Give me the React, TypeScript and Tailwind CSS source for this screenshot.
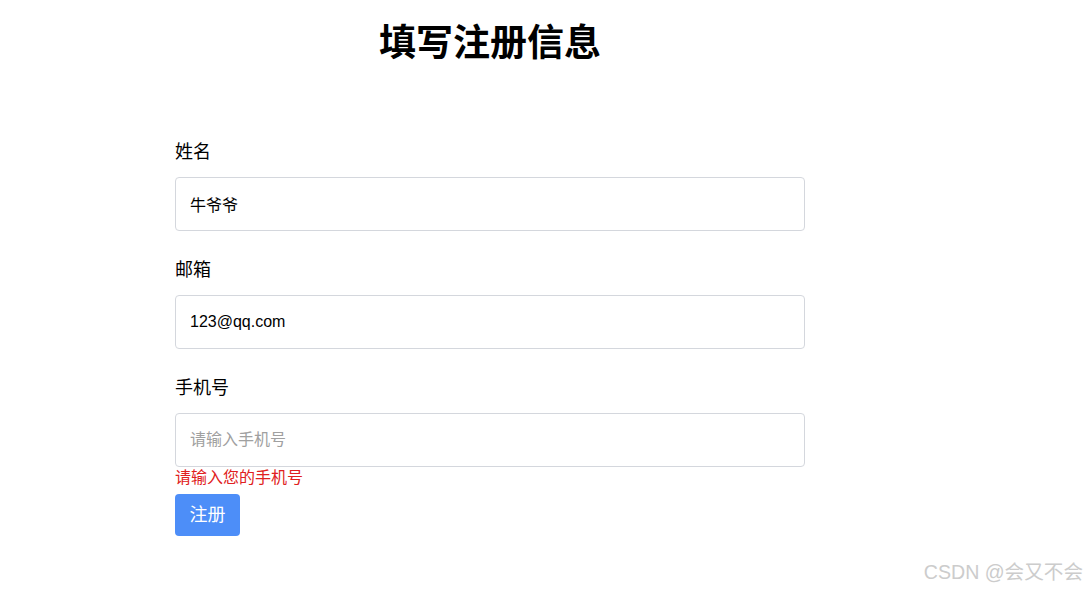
import { useState } from 'react';

const font = "font-['Liberation_Sans','Noto_Sans_CJK_SC',sans-serif]";

export default function App() {
  const [name, setName] = useState('牛爷爷');
  const [email, setEmail] = useState('123@qq.com');
  const [phone, setPhone] = useState('');

  return (
    <div className={`relative min-h-[590px] w-full bg-white ${font}`}>
      <div className="ml-[175px] w-[630px] pt-[22px]">
        <h1 className="text-center text-[37px] leading-[44px] font-bold text-black">填写注册信息</h1>
        <form className="mt-[73px]" onSubmit={(e) => e.preventDefault()}>
          <Field label="姓名" value={name} onChange={setName} placeholder="请输入姓名" />
          <Field label="邮箱" value={email} onChange={setEmail} placeholder="请输入邮箱" />
          <Field label="手机号" value={phone} onChange={setPhone} placeholder="请输入手机号" last />
          <p className="text-[16px] leading-[22px] text-[#e02020]">请输入您的手机号</p>
          <button
            type="submit"
            className="mt-[5px] h-[42px] w-[65px] rounded-[4px] bg-[#4d8ef8] text-[18px] text-white"
          >
            注册
          </button>
        </form>
      </div>
      <div className="absolute right-[4px] bottom-[5px] text-[19.6px] leading-[26px] text-[#cccccc]">
        CSDN @会又不会
      </div>
    </div>
  );
}

function Field({
  label,
  value,
  onChange,
  placeholder,
  last = false,
}: {
  label: string;
  value: string;
  onChange: (v: string) => void;
  placeholder: string;
  last?: boolean;
}) {
  return (
    <div className={last ? '' : 'mb-[26px]'}>
      <label className="block text-[18px] leading-[26px] text-black">{label}</label>
      <input
        className="mt-[12px] box-border block h-[54px] w-full rounded-[4px] border border-[#d4d7dd] px-[14px] text-[16px] text-black outline-none placeholder:text-[#a0a0a0]"
        value={value}
        placeholder={placeholder}
        onChange={(e) => onChange(e.target.value)}
      />
    </div>
  );
}
